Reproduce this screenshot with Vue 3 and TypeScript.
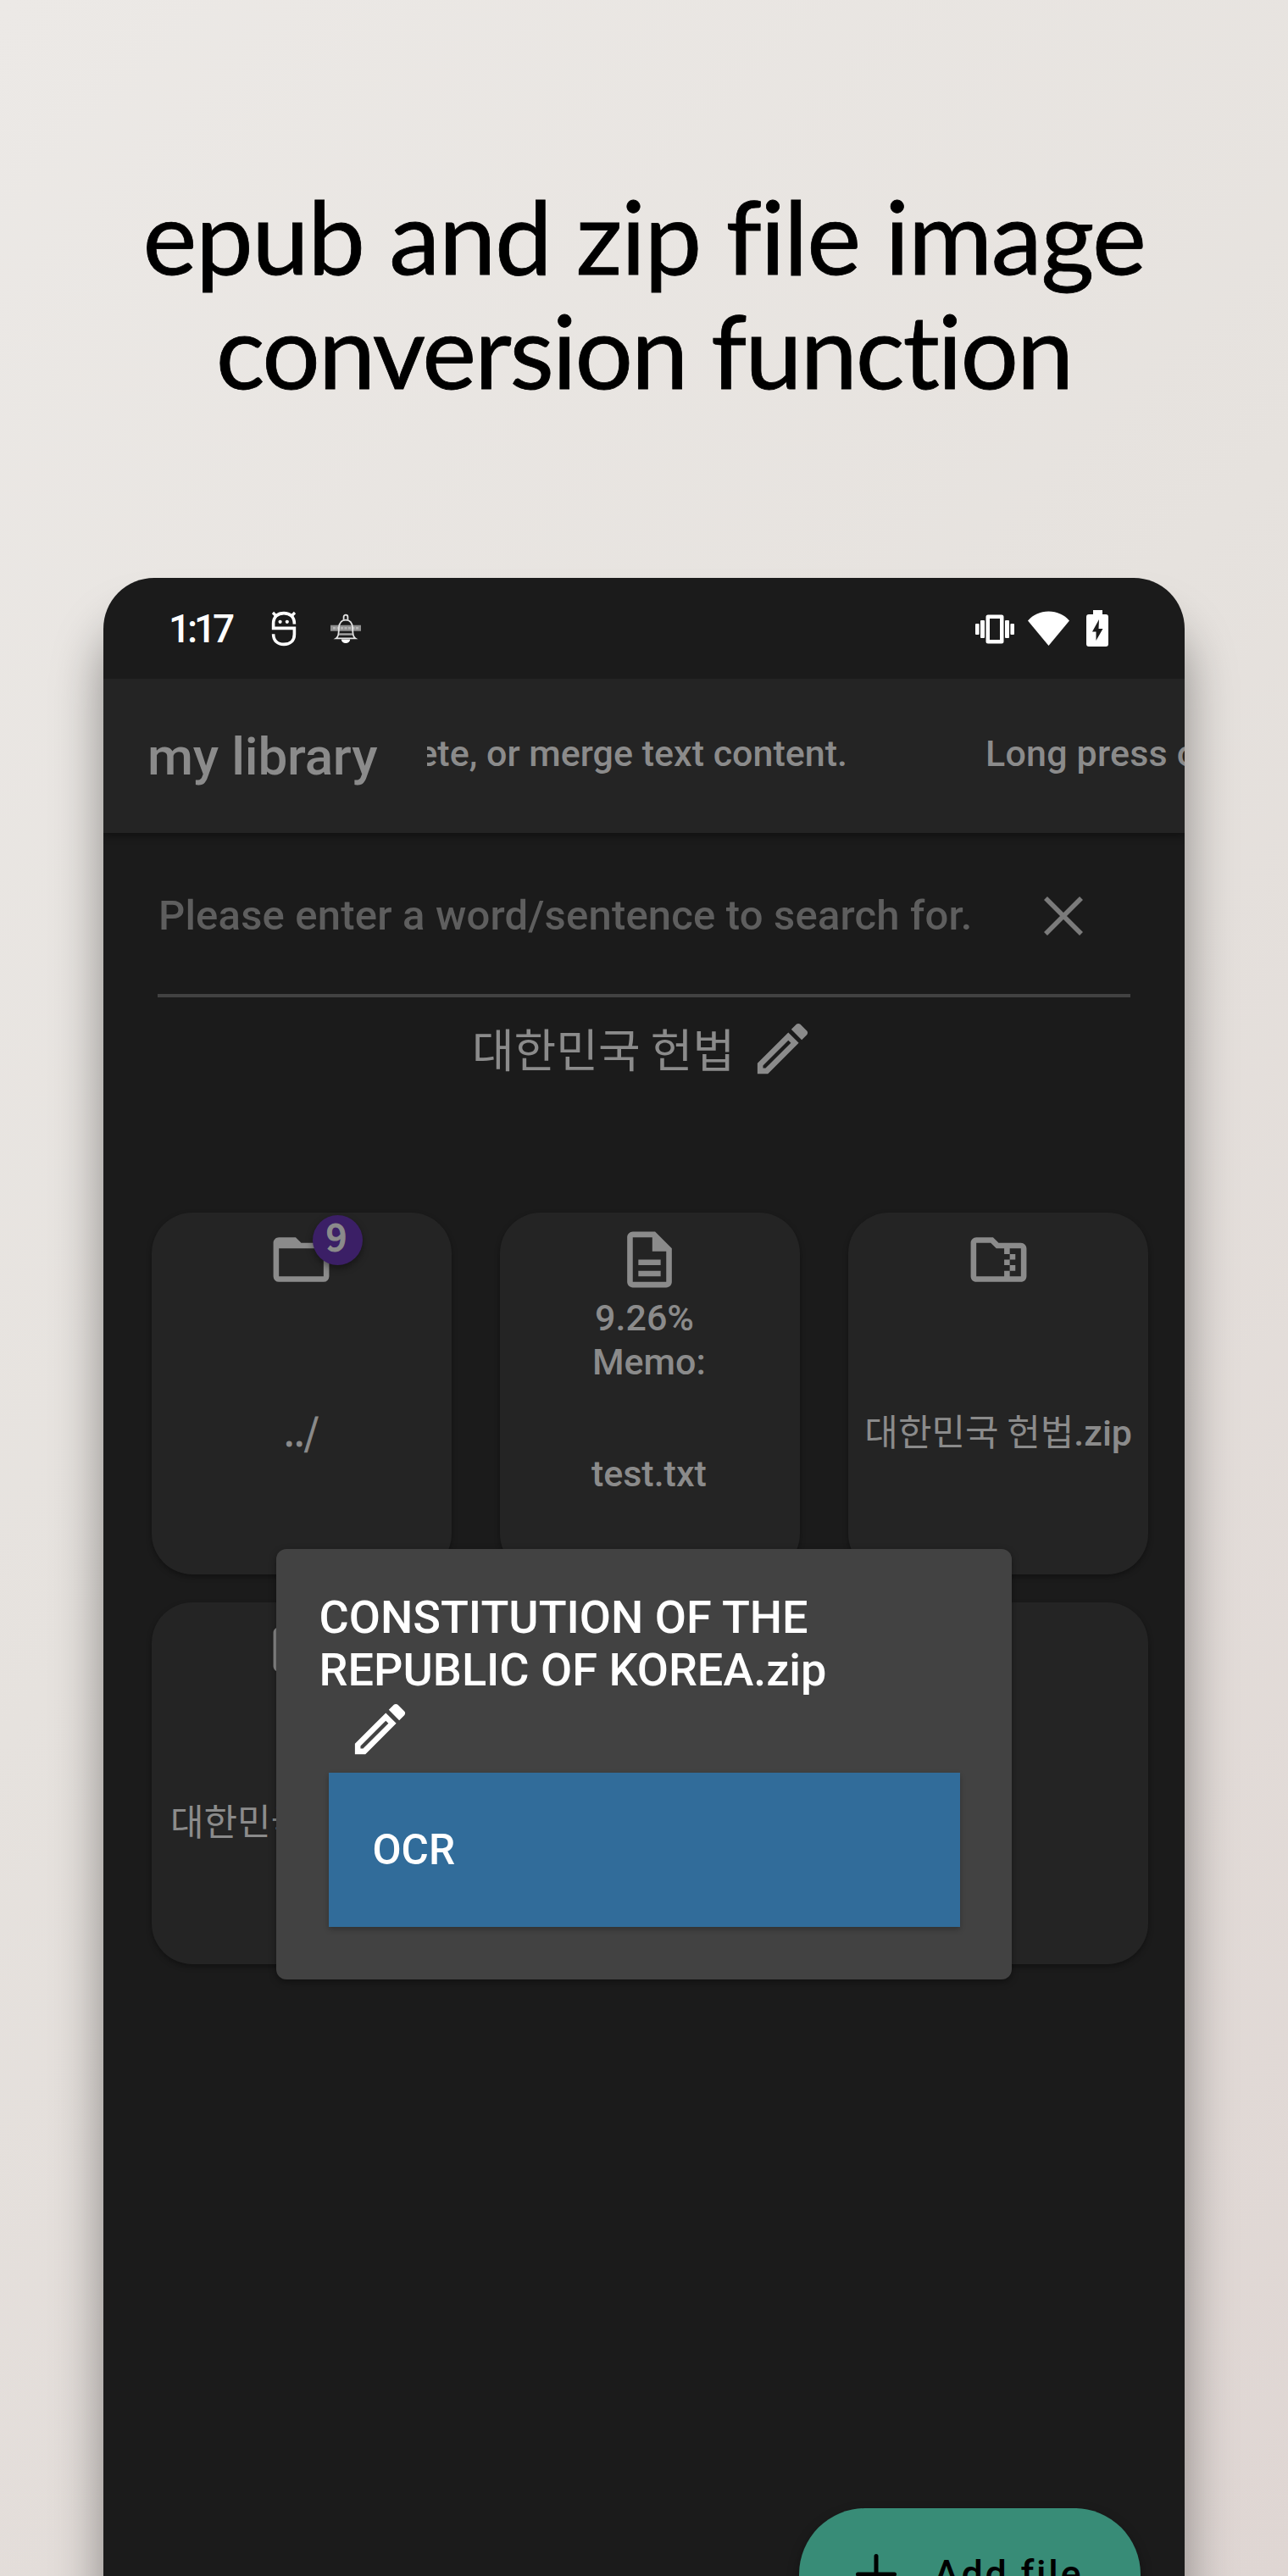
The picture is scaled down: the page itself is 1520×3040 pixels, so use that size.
<script setup lang="ts">
interface FileCard {
  id: number
  icon: 'folder' | 'doc' | 'zip' | null
  badge?: string
  meta?: string[]
  thin?: string
  name?: string
}

const cards: FileCard[] = [
  { id: 1, icon: 'folder', badge: '9', thin: '../' },
  { id: 2, icon: 'doc', meta: ['9.26%\u00a0', 'Memo:'], name: 'test.txt' },
  { id: 3, icon: 'zip', thin: '대한민국 헌법', name: '.zip' },
  { id: 4, icon: 'zip', thin: '대한민국 헌법', name: '.txt' },
  { id: 5, icon: null },
  { id: 6, icon: null },
]

const iconPaths = {
  folder: 'M20 18H4V8H20M20 6H12L10 4H4C2.89 4 2 4.89 2 6V18A2 2 0 0 0 4 20H20A2 2 0 0 0 22 18V8C22 6.89 21.1 6 20 6Z',
  doc: 'M8 16h8v2H8zM8 12h8v2H8zM14 2H6c-1.1 0-2 .9-2 2v16c0 1.1.89 2 1.99 2H18c1.1 0 2-.9 2-2V8l-6-6zM18 20H6V4h7v5h5v11z',
  zip: 'M20 6h-8l-2-2H4c-1.1 0-2 .9-2 2v12c0 1.1.9 2 2 2h16c1.1 0 2-.9 2-2V8c0-1.1-.9-2-2-2zM4 6h5.17l2 2H14v2h2v2h-2v2h2v2h-2v2H4zM16 18v-2h2v-2h-2v-2h2v-2h-2V8h4v10z',
  pencil: 'M14.06 9L15 9.94L5.92 19H5V18.08L14.06 9M17.66 3C17.41 3 17.15 3.1 16.96 3.29L15.13 5.12L18.88 8.87L20.71 7.04C21.1 6.65 21.1 6 20.71 5.63L18.37 3.29C18.17 3.09 17.92 3 17.66 3M14.06 6.19L3 17.25V21H6.75L17.81 9.94L14.06 6.19Z',
}
</script>

<template>
  <main class="page">
    <h1 class="headline">
      <span class="line line-a">epub and zip file image</span>
      <span class="line line-b">conversion function</span>
    </h1>

    <section class="phone">
      <div class="status">
        <span class="clock">1:17</span>
        <svg class="face" width="30" height="42" viewBox="0 0 30 42" fill="none" stroke="#fff" stroke-width="3.6">
          <path d="M27.4 15.5C27.4 6.5 22 2.6 15 2.6S2.6 6.5 2.6 15v5.4h24.8v7C27.4 35 22.5 39.4 15 39.4S2.6 35 2.6 27.2" />
          <path d="M2 2l5 5M28 2l-5 5" stroke-width="3.2" />
          <circle cx="10.6" cy="12.8" r="2.1" fill="#fff" stroke="none" />
          <circle cx="18.8" cy="12.8" r="2.1" fill="#fff" stroke="none" />
        </svg>
        <svg class="bell" width="36" height="36" viewBox="0 0 36 36" fill="none" stroke="#e4e4e4" stroke-width="1.8">
          <path d="M0 17.300h36" stroke="#8f8f8f" stroke-width="7" />
          <path d="M3 17.300h30" stroke="#b4b4b4" stroke-width="2.400" stroke-dasharray="3 1.500" />
          <path d="M15.600 7.500V4a2.400 2.400 0 0 1 4.800 0v3.500" />
          <path d="M6.500 29.400c3-2 3.200-5.500 3.400-12C10.200 10.500 13 7.600 18 7.600s7.800 2.900 8.100 9.800c.2 6.500.4 10 3.400 12z" />
          <path d="M10 24.500h16" stroke="#a5a5a5" stroke-width="2.400" />
          <path d="M12.800 30.500h10.400a5.200 4.600 0 0 1-10.400 0z" fill="#fff" stroke="none" />
        </svg>
        <span class="grow"></span>
        <svg class="vibrate" width="46" height="36" viewBox="0 0 46 36" fill="#fff">
          <rect x="0" y="12" width="4.600" height="13" rx="1" />
          <rect x="6" y="8" width="5" height="21" rx="1" />
          <path fill-rule="evenodd" d="M15 1.500h16a2.500 2.500 0 0 1 2.500 2.500v29a2.500 2.500 0 0 1-2.500 2.500h-16a2.500 2.500 0 0 1-2.500-2.500v-29a2.500 2.500 0 0 1 2.500-2.500zM17 6v25h12v-25z" />
          <rect x="35" y="8" width="5" height="21" rx="1" />
          <rect x="41.400" y="12" width="4.600" height="13" rx="1" />
        </svg>
        <svg class="wifi" width="49" height="41" viewBox="0 0 49 41" fill="#fff">
          <path d="M24.500 41L0 11.500C6 4.500 14.500.5 24.500.5S43 4.500 49 11.500z" />
        </svg>
        <svg class="battery" width="26" height="43" viewBox="0 0 26 43">
          <path fill="#fff" d="M8 0h11v5h4a3 3 0 0 1 3 3v32a3 3 0 0 1-3 3H3a3 3 0 0 1-3-3V8a3 3 0 0 1 3-3h5z" />
          <path fill="#1b1b1b" d="M15 11L7 25.500h4.500V36L19.500 22H14.500z" />
        </svg>
      </div>

      <header class="appbar">
        <h2 class="apptitle">my library</h2>
        <div class="ticker">
          <div class="tick-first"><span>delete, or merge text content.</span></div>
          <span class="tick-next">Long press on a file</span>
        </div>
      </header>

      <div class="search">
        <span class="placeholder">Please enter a word/sentence to search for.</span>
        <svg width="46" height="46" viewBox="0 0 46 46" fill="none" stroke="#7b7b7b" stroke-width="5.600">
          <path d="M2 2L44 44M44 2L2 44" />
        </svg>
      </div>
      <div class="rule"></div>

      <div class="folder">
        <span>대한민국 헌법</span>
        <svg class="icon" viewBox="0 0 24 24"><path :d="iconPaths.pencil" /></svg>
      </div>

      <div class="grid">
        <article v-for="c in cards" :key="c.id" class="card">
          <svg v-if="c.icon" class="icon" viewBox="0 0 24 24">
            <path fill-rule="evenodd" :d="iconPaths[c.icon]" />
          </svg>
          <span v-if="c.badge" class="badge">{{ c.badge }}</span>
          <div v-if="c.meta" class="meta">
            <div v-for="m in c.meta" :key="m">{{ m }}</div>
          </div>
          <div v-if="c.name || c.thin" class="name" :class="{ lifted: c.meta }">
            <div><span v-if="c.thin" class="thin" :class="{ dots: c.badge }">{{ c.thin }}</span><span v-if="c.name">{{ c.name }}</span></div>
          </div>
        </article>
      </div>

      <div class="dialog">
        <h3 class="dialog-title">CONSTITUTION OF THE<br />REPUBLIC OF KOREA.zip</h3>
        <svg class="icon" viewBox="0 0 24 24"><path :d="iconPaths.pencil" /></svg>
        <button class="ocr" type="button">OCR</button>
      </div>

      <button class="fab" type="button">
        <svg width="50" height="50" viewBox="0 0 50 50" fill="none" stroke="#000" stroke-width="5" stroke-linecap="round">
          <path d="M25 3.500v43M3.500 25h43" />
        </svg>
        <span>Add file</span>
      </button>
    </section>
  </main>
</template>

<style>
body {
  margin: 0;
}
</style>

<style scoped>
.page {
  box-sizing: border-box;
  width: 1520px;
  height: 3040px;
  padding-top: 210px;
  overflow: hidden;
  background: linear-gradient(135deg, #ece9e6 0%, #e6e2de 45%, #dfd6d3 100%);
  font-family: Roboto, "Noto Sans CJK KR", sans-serif;
  font-weight: 500;
}

.headline {
  margin: 0;
  height: 270px;
  display: flex;
  flex-direction: column;
  align-items: center;
  font: 400 121px/135px Lato, "Open Sans", sans-serif;
  color: #000;
  white-space: nowrap;
  font-variant-ligatures: none;
  -webkit-text-stroke: 0.8px #000;
}
.line-a {
  letter-spacing: -1.45px;
}
.line-b {
  letter-spacing: -2.2px;
}

.phone {
  position: relative;
  width: 1276px;
  height: 2700px;
  margin: 202px 0 0 122px;
  border-radius: 60px 60px 0 0;
  background: #1b1b1b;
  box-shadow: 0 55px 60px rgba(0, 0, 0, 0.4);
}

.status {
  box-sizing: border-box;
  height: 119px;
  display: flex;
  align-items: center;
  padding: 0 90px 0 77px;
}
.clock {
  width: 82px;
  font-size: 46px;
  letter-spacing: -4.1px;
  color: #fff;
  white-space: nowrap;
}
.face {
  margin-left: 39px;
}
.bell {
  margin-left: 40px;
}
.grow {
  flex: 1;
}
.wifi {
  margin-left: 16px;
}
.battery {
  margin-left: 20px;
}

.appbar {
  height: 182px;
  display: flex;
  align-items: center;
  background: #242424;
  box-shadow: 0 4px 8px rgba(0, 0, 0, 0.35);
  clip-path: inset(0 0 -16px 0);
}
.apptitle {
  margin: 2px 0 0;
  padding-left: 52px;
  width: 330px;
  font-size: 62px;
  font-weight: 500;
  letter-spacing: -0.2px;
  line-height: 74px;
  color: #8b8b8b;
}
.ticker {
  flex: 1;
  min-width: 0;
  height: 60px;
  padding-bottom: 7px;
  display: flex;
  overflow: hidden;
  font-size: 43px;
  line-height: 60px;
  white-space: nowrap;
  color: #8b8b8b;
}
.tick-first {
  flex: none;
  width: 496px;
  display: flex;
  justify-content: flex-end;
  overflow: hidden;
}
.tick-next {
  margin-left: 163px;
  letter-spacing: 0.2px;
}

.search {
  margin: 68px 120px 0 65px;
  height: 60px;
  display: flex;
  align-items: center;
  justify-content: space-between;
}
.placeholder {
  font-size: 49px;
  line-height: 60px;
  letter-spacing: 0.18px;
  color: #5e5e5e;
  white-space: nowrap;
}
.rule {
  height: 4px;
  margin: 62px 64px 0;
  background: #424242;
}

.icon {
  flex: none;
  width: 79px;
  height: 79px;
  fill: #8b8b8b;
}
.folder {
  height: 60px;
  margin-top: 30px;
  display: flex;
  align-items: center;
  justify-content: center;
  gap: 17px;
  font: 400 54px/60px "Noto Sans CJK KR", sans-serif;
  color: #8b8b8b;
}

.grid {
  margin: 164px 42px 0 56.6px;
  display: grid;
  grid-template-columns: repeat(3, 354px);
  grid-auto-rows: 427px;
  gap: 33px 57.3px;
}
.card {
  box-sizing: border-box;
  position: relative;
  display: flex;
  flex-direction: column;
  align-items: center;
  padding-top: 16px;
  border-radius: 48px;
  background: #242424;
  box-shadow: 0 3px 6px rgba(0, 0, 0, 0.35);
  font-size: 43px;
  line-height: 51.5px;
  color: #8b8b8b;
  white-space: nowrap;
}
.badge {
  position: absolute;
  left: 190px;
  top: 3px;
  width: 59px;
  height: 59px;
  border-radius: 50%;
  background: #3b1f66;
  box-shadow: 0 4px 8px rgba(0, 0, 0, 0.4);
  font: 500 43px/47px "Noto Sans CJK KR", sans-serif;
  -webkit-text-stroke: 1.2px #8b8b8b;
  text-align: center;
  text-indent: -2px;
}
.meta {
  margin-top: 4px;
  padding-right: 2px;
  text-align: center;
}
.name {
  flex: 1;
  display: flex;
  align-items: center;
}
.name.lifted {
  margin-bottom: 11px;
  padding-right: 2px;
}
.thin {
  font-family: "Noto Sans CJK KR", sans-serif;
  font-weight: 400;
  line-height: 0;
}
.dots {
  -webkit-text-stroke: 1px #8b8b8b;
}

.dialog {
  box-sizing: border-box;
  position: absolute;
  left: 204px;
  top: 1146px;
  width: 868px;
  height: 508px;
  padding: 50px 61.5px 0 50.5px;
  border-radius: 12px;
  background: #424242;
  box-shadow: 0 3px 8px rgba(0, 0, 0, 0.4);
  display: flex;
  flex-direction: column;
  align-items: flex-start;
}
.dialog-title {
  margin: 0;
  font-size: 54px;
  font-weight: 500;
  line-height: 61.5px;
  color: #fff;
  white-space: nowrap;
}
.dialog .icon {
  margin-left: 32px;
  fill: #fff;
}
.ocr {
  align-self: flex-end;
  width: 745px;
  height: 182px;
  margin-top: 12px;
  padding: 0 0 0 52px;
  border: 0;
  background: #316c9a;
  box-shadow: 0 3px 6px rgba(0, 0, 0, 0.25);
  font: 500 49.5px/60px Roboto, sans-serif;
  text-align: left;
  color: #fff;
}

.fab {
  box-sizing: border-box;
  position: absolute;
  left: 821px;
  top: 2278px;
  width: 403px;
  height: 156px;
  padding: 0 0 0 66px;
  border: 0;
  border-radius: 78px;
  background: #388c77;
  box-shadow: 0 6px 14px rgba(0, 0, 0, 0.35);
  display: flex;
  align-items: center;
  gap: 45px;
  font: 500 45px/60px Roboto, sans-serif;
  letter-spacing: 2.7px;
  color: #000;
}
.fab span {
  margin-left: -2px;
}
</style>
